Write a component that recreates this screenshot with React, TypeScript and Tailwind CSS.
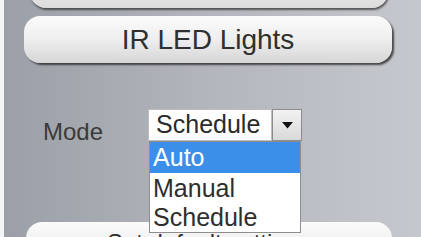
export default function App() {
  const font = { fontFamily: '"Liberation Sans", Arial, sans-serif' }
  return (
    <div className="w-[421px] h-[237px] overflow-hidden flex bg-white" style={font}>
      <div className="w-[4px] bg-[#f4f5f6]" />
      <div className="flex-1 flex flex-col pl-[20px] pr-[29px] bg-gradient-to-r from-[#9b9fa7] via-[#b3b6bc] to-[#c5c8cd]">
        <div className="-mt-[36px] ml-[6px] mr-[4px] h-[44px] shrink-0 rounded-[16px] bg-gradient-to-b from-[#f7f7f7] to-[#dcdcdc] shadow-[1px_2px_2px_rgba(40,40,40,0.7)]" />
        <button className="mt-[8px] h-[47px] shrink-0 rounded-[16px] bg-gradient-to-b from-[#fbfbfb] via-[#eeeeee] to-[#d6d6d6] shadow-[2px_2px_2px_rgba(30,30,30,0.75)] text-[28px] text-[#2f2f2f]">
          IR LED Lights
        </button>
        <div className="mt-[45px] flex items-start">
          <span className="ml-[19px] mt-[9px] text-[24px] leading-[30px] text-[#3a3a3a]">Mode</span>
          <div className="ml-[45px] w-[154px] relative z-10">
            <div className="flex h-[32px] mt-[1px]">
              <div className="flex-1 bg-white border border-[#bdbdbd] text-[25px] leading-[28px] text-[#2a2a2a] pl-[7px]">
                Schedule
              </div>
              <div className="w-[30px] bg-gradient-to-b from-[#f2f2f2] to-[#d9d9d9] border border-[#8c8c8c] flex items-center justify-center">
                <svg width="11" height="7" viewBox="0 0 11 7">
                  <path d="M0 0h11L5.5 6.5z" fill="#111" />
                </svg>
              </div>
            </div>
            <div className="absolute left-[1px] top-[33px] w-[152px] bg-white border border-[#8e8e8e] text-[25px] text-[#2e2e2e]">
              <div className="h-[31px] leading-[31px] bg-[#3b8fe9] text-white pl-[3px]">Auto</div>
              <div className="h-[30px] leading-[30px] pl-[3px]">Manual</div>
              <div className="h-[29px] leading-[29px] pl-[3px]">Schedule</div>
            </div>
          </div>
        </div>
        <div className="mt-[75px] ml-[2px] h-[44px] shrink-0 rounded-[16px] bg-gradient-to-b from-[#fbfbfb] to-[#e3e3e3] text-[24px] leading-[28px] text-[#2f2f2f] pt-[7px] text-center">
          Set default settings
        </div>
      </div>
    </div>
  )
}
